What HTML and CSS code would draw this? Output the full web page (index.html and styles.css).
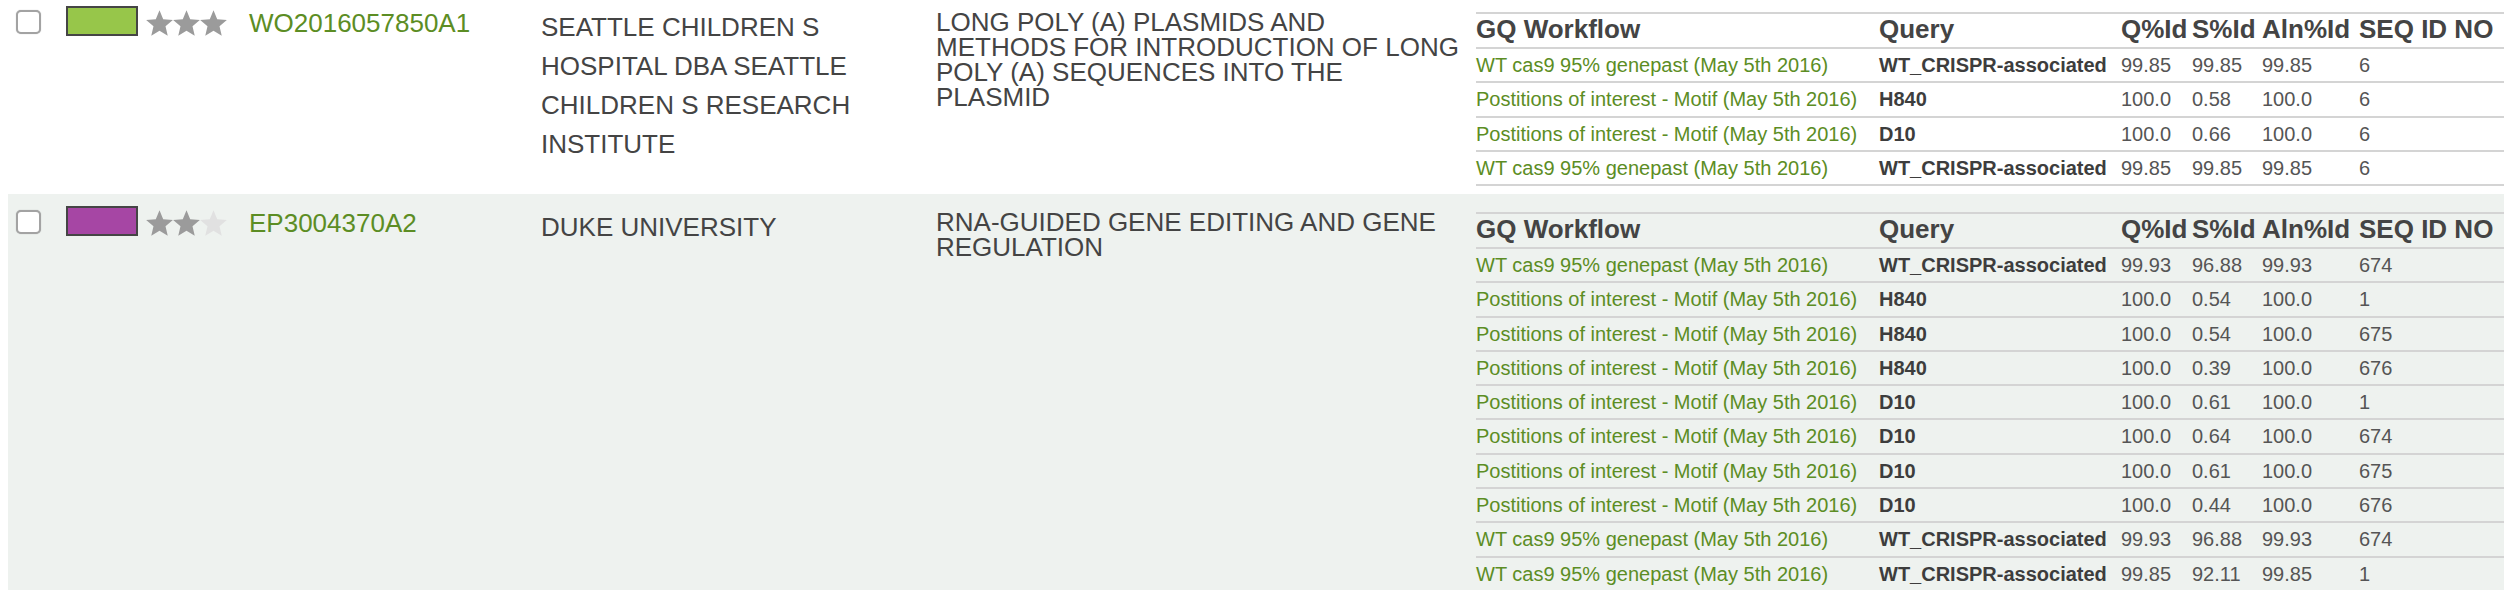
FILE: index.html
```html
<!DOCTYPE html>
<html lang="en">
<head>
<meta charset="utf-8">
<title>Patent results</title>
<link rel="stylesheet" href="styles.css">
</head>
<body>
<svg class="defs" width="0" height="0" aria-hidden="true">
  <defs>
    <symbol id="star" viewBox="0 0 100 96">
      <polygon points="50,1 63.75,34.07 99.45,36.93 72.25,60.23 80.56,95.07 50,76.4 19.44,95.07 27.75,60.23 0.55,36.93 36.25,34.07"/>
    </symbol>
  </defs>
</svg>
<div class="results">
  <div class="result">
    <input type="checkbox" class="pick">
    <span class="swatch swatch-green"></span>
    <span class="stars">
      <svg class="star star-on"><use href="#star"/></svg>
      <svg class="star star-on"><use href="#star"/></svg>
      <svg class="star star-on"><use href="#star"/></svg>
    </span>
    <a class="pid" href="#">WO2016057850A1</a>
    <div class="assignee">SEATTLE CHILDREN S HOSPITAL DBA SEATTLE CHILDREN S RESEARCH INSTITUTE</div>
    <div class="title">LONG POLY (A) PLASMIDS AND METHODS FOR INTRODUCTION OF LONG POLY (A) SEQUENCES INTO THE PLASMID</div>
    <div class="matches">
      <table class="gq">
        <colgroup>
          <col class="c-wf"><col class="c-q"><col class="c-n"><col class="c-s"><col class="c-a"><col>
        </colgroup>
        <thead>
          <tr><th>GQ Workflow</th><th>Query</th><th>Q%Id</th><th>S%Id</th><th>Aln%Id</th><th>SEQ ID NO</th></tr>
        </thead>
        <tbody>
          <tr><td class="wf"><a href="#">WT cas9 95% genepast (May 5th 2016)</a></td><td class="qn">WT_CRISPR-associated</td><td>99.85</td><td>99.85</td><td>99.85</td><td>6</td></tr>
          <tr><td class="wf"><a href="#">Postitions of interest - Motif (May 5th 2016)</a></td><td class="qn">H840</td><td>100.0</td><td>0.58</td><td>100.0</td><td>6</td></tr>
          <tr><td class="wf"><a href="#">Postitions of interest - Motif (May 5th 2016)</a></td><td class="qn">D10</td><td>100.0</td><td>0.66</td><td>100.0</td><td>6</td></tr>
          <tr><td class="wf"><a href="#">WT cas9 95% genepast (May 5th 2016)</a></td><td class="qn">WT_CRISPR-associated</td><td>99.85</td><td>99.85</td><td>99.85</td><td>6</td></tr>
        </tbody>
      </table>
    </div>
  </div>

  <div class="result result-alt">
    <input type="checkbox" class="pick">
    <span class="swatch swatch-purple"></span>
    <span class="stars">
      <svg class="star star-on"><use href="#star"/></svg>
      <svg class="star star-on"><use href="#star"/></svg>
      <svg class="star star-off"><use href="#star"/></svg>
    </span>
    <a class="pid" href="#">EP3004370A2</a>
    <div class="assignee">DUKE UNIVERSITY</div>
    <div class="title">RNA-GUIDED GENE EDITING AND GENE REGULATION</div>
    <div class="matches">
      <table class="gq">
        <colgroup>
          <col class="c-wf"><col class="c-q"><col class="c-n"><col class="c-s"><col class="c-a"><col>
        </colgroup>
        <thead>
          <tr><th>GQ Workflow</th><th>Query</th><th>Q%Id</th><th>S%Id</th><th>Aln%Id</th><th>SEQ ID NO</th></tr>
        </thead>
        <tbody>
          <tr><td class="wf"><a href="#">WT cas9 95% genepast (May 5th 2016)</a></td><td class="qn">WT_CRISPR-associated</td><td>99.93</td><td>96.88</td><td>99.93</td><td>674</td></tr>
          <tr><td class="wf"><a href="#">Postitions of interest - Motif (May 5th 2016)</a></td><td class="qn">H840</td><td>100.0</td><td>0.54</td><td>100.0</td><td>1</td></tr>
          <tr><td class="wf"><a href="#">Postitions of interest - Motif (May 5th 2016)</a></td><td class="qn">H840</td><td>100.0</td><td>0.54</td><td>100.0</td><td>675</td></tr>
          <tr><td class="wf"><a href="#">Postitions of interest - Motif (May 5th 2016)</a></td><td class="qn">H840</td><td>100.0</td><td>0.39</td><td>100.0</td><td>676</td></tr>
          <tr><td class="wf"><a href="#">Postitions of interest - Motif (May 5th 2016)</a></td><td class="qn">D10</td><td>100.0</td><td>0.61</td><td>100.0</td><td>1</td></tr>
          <tr><td class="wf"><a href="#">Postitions of interest - Motif (May 5th 2016)</a></td><td class="qn">D10</td><td>100.0</td><td>0.64</td><td>100.0</td><td>674</td></tr>
          <tr><td class="wf"><a href="#">Postitions of interest - Motif (May 5th 2016)</a></td><td class="qn">D10</td><td>100.0</td><td>0.61</td><td>100.0</td><td>675</td></tr>
          <tr><td class="wf"><a href="#">Postitions of interest - Motif (May 5th 2016)</a></td><td class="qn">D10</td><td>100.0</td><td>0.44</td><td>100.0</td><td>676</td></tr>
          <tr><td class="wf"><a href="#">WT cas9 95% genepast (May 5th 2016)</a></td><td class="qn">WT_CRISPR-associated</td><td>99.93</td><td>96.88</td><td>99.93</td><td>674</td></tr>
          <tr><td class="wf"><a href="#">WT cas9 95% genepast (May 5th 2016)</a></td><td class="qn">WT_CRISPR-associated</td><td>99.85</td><td>92.11</td><td>99.85</td><td>1</td></tr>
        </tbody>
      </table>
    </div>
  </div>
</div>
</body>
</html>
```

FILE: styles.css
```css
html, body {
  margin: 0;
  padding: 0;
  background: #fff;
}

body {
  font-family: "Liberation Sans", Arial, Helvetica, sans-serif;
  color: #444;
  overflow: hidden;
}

.defs {
  position: absolute;
  width: 0;
  height: 0;
}

.results {
  margin: -6px 0 0 8px;
}

.result {
  display: flex;
  align-items: flex-start;
  padding: 12px 0 7.8px 8px;
  background: #fff;
}

.result-alt {
  background: #eef2ef;
}

.pick {
  -webkit-appearance: none;
  appearance: none;
  flex: none;
  box-sizing: border-box;
  width: 25px;
  height: 24px;
  margin: 4px 0 0 0;
  border: 2px solid #a3a3a3;
  border-radius: 5px;
  background: #fff;
  box-shadow: 0 0 1px rgba(0, 0, 0, 0.3);
}

.swatch {
  flex: none;
  box-sizing: border-box;
  width: 72px;
  height: 30px;
  margin-left: 25px;
  border: 2px solid #454545;
}

.swatch-green {
  background: #97c64a;
}

.swatch-purple {
  background: #a646a4;
}

.stars {
  flex: none;
  display: flex;
  margin: 4px 0 0 8px;
}

.star {
  display: block;
  width: 27px;
  height: 26px;
}

.star-on {
  fill: #9b9b9b;
}

.star-off {
  fill: #e1e1e1;
}

.pid {
  flex: none;
  width: 292px;
  margin: 3.7px 0 0 22px;
  font-size: 26px;
  line-height: 26px;
  color: #5c8d24;
  text-decoration: none;
}

.assignee {
  flex: none;
  width: 355px;
  padding-right: 40px;
  margin-top: 2px;
  font-size: 26px;
  line-height: 39px;
  color: #444;
}

.title {
  flex: none;
  width: 525px;
  padding-right: 15px;
  margin-top: 4px;
  font-size: 26px;
  line-height: 25px;
  color: #444;
}

.matches {
  flex: 1 1 auto;
  min-width: 0;
  margin-top: 6px;
}

.gq {
  width: 100%;
  table-layout: fixed;
  border-collapse: separate;
  border-spacing: 0;
}

.c-wf { width: 403px; }
.c-q { width: 242px; }
.c-n { width: 71px; }
.c-s { width: 70px; }
.c-a { width: 97px; }

.gq th {
  text-align: left;
  font-weight: bold;
  font-size: 26px;
  line-height: 26px;
  padding: 2px 0 5px;
  border-top: 2px solid #d4d4d4;
  color: #444;
  white-space: nowrap;
}

.gq td {
  text-align: left;
  font-size: 20px;
  line-height: 24px;
  padding: 4px 0 4.3px;
  border-top: 2px solid #d4d4d4;
  color: #555;
  white-space: nowrap;
}

.gq tbody tr:last-child td {
  border-bottom: 2px solid #d4d4d4;
}

.gq .wf a {
  color: #5c8d24;
  text-decoration: none;
}

.gq .qn {
  font-weight: bold;
  color: #3d3d3d;
}
```
